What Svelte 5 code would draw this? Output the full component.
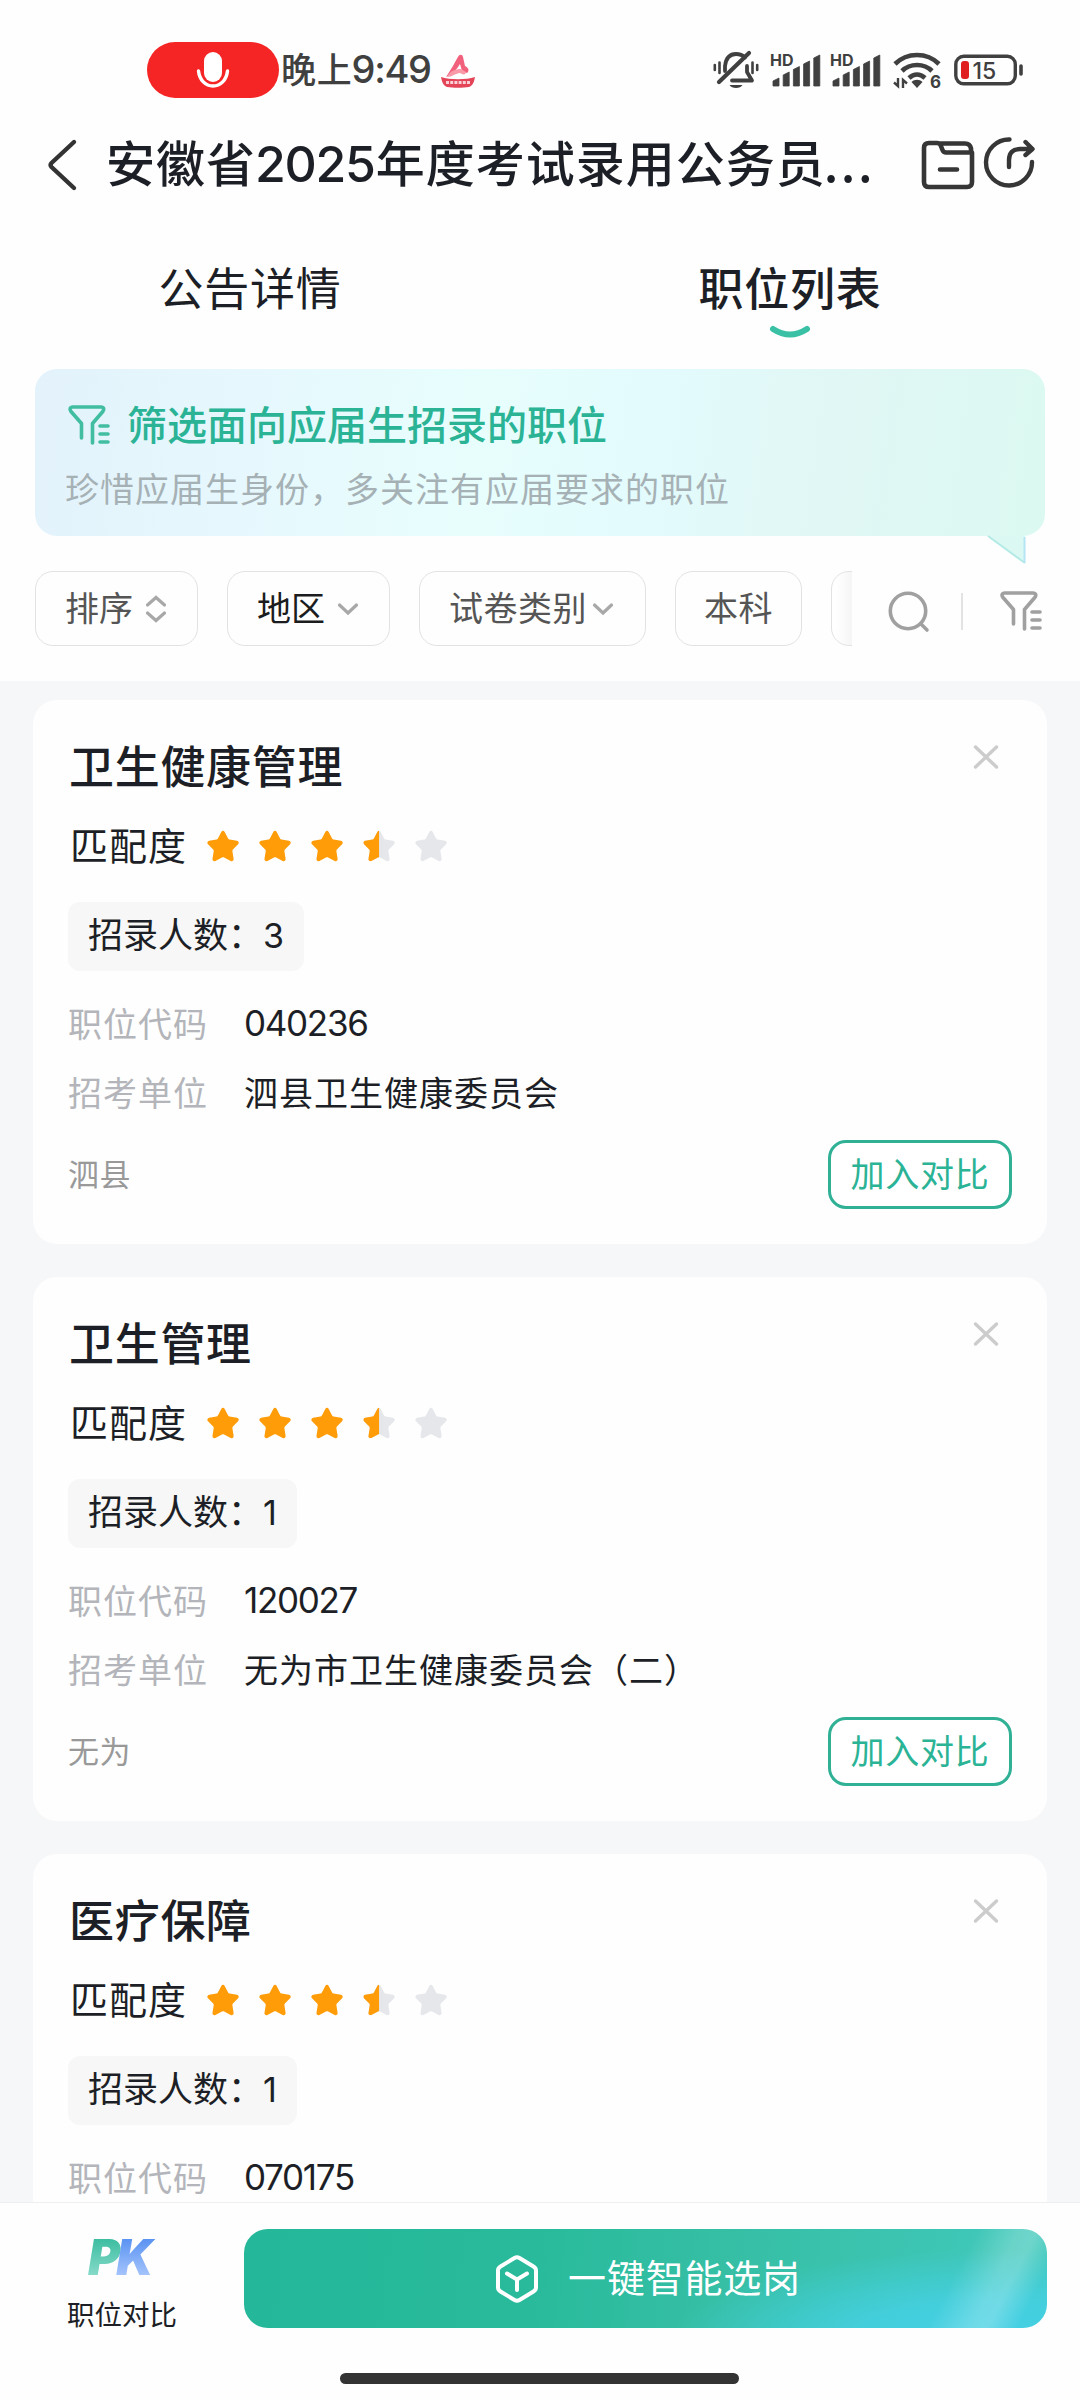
<script>
  const filters = [
    { label: '排序', icon: 'sort' },
    { label: '地区', icon: 'down', active: true },
    { label: '试卷类别', icon: 'down', tight: true },
    { label: '本科', plain: true }
  ];

  const jobs = [
    { title: '卫生健康管理', count: 3, code: '040236', unit: '泗县卫生健康委员会', area: '泗县' },
    { title: '卫生管理', count: 1, code: '120027', unit: '无为市卫生健康委员会（二）', area: '无为' },
    { title: '医疗保障', count: 1, code: '070175' }
  ];

  const stars = ['full', 'full', 'full', 'half', 'none'];
  const starPath =
    'M14.3 1.9c.7-1.5 2.7-1.5 3.4 0l3.4 6.6c.3.6.8 1 1.500 1.100l7.300 1.100c1.800.3 2.500 2.300 1.200 3.600l-5.200 5.300c-.4.4-.6 1.100-.5 1.700l1.200 7.500c.3 1.700-1.400 2.900-2.900 2.100l-6.600-3.500c-.6-.3-1.500-.3-2.100 0l-6.600 3.500c-1.500.8-3.200-.4-2.900-2.100l1.200-7.500c.1-.6-.1-1.300-.5-1.700L1 14.300c-1.300-1.300-.6-3.300 1.200-3.600l7.300-1.100c.6-.1 1.100-.5 1.400-1.100z';
  const bars = [8, 14, 19.5, 25, 31];
</script>

{#snippet funnel()}
  <svg class="funnel" viewBox="0 0 42 40" width="42" height="40">
    <path
      d="M13.500 33V18.500L3 6.500C1.200 4.400 2 2 4.800 2H33c2.800 0 3.600 2.400 1.800 4.500L24.500 18.500V38M32 21h8M32 29h8M32 37h8"
      fill="none" stroke="currentColor" stroke-width="3.600" stroke-linecap="round" stroke-linejoin="round" />
  </svg>
{/snippet}

{#snippet signal()}
  <svg class="signal" viewBox="0 0 50 40" width="50" height="40">
    <text x="-1" y="16" class="hd">HD</text>
    {#each bars as h, i}
      <path d="M{2 + i * 10.200} {36 - h + 3}l6-3V36h-6z" fill="#404040" stroke="#404040" stroke-width=".8" stroke-linejoin="round" />
    {/each}
  </svg>
{/snippet}

<div class="screen">
  <div class="status">
    <div class="mic">
      <svg viewBox="0 0 34 38" width="34" height="38">
        <rect x="8" y="1" width="18" height="30" rx="9" fill="#fff" />
        <path d="M2.500 20c1 9 7 15 14.500 15s13.500-6 14.500-15" fill="none" stroke="#fff" stroke-width="3.400" stroke-linecap="round" />
      </svg>
    </div>
    <div class="time">晚上<span>9:49</span></div>
    <svg class="boat" viewBox="0 0 36 34" width="36" height="34">
      <path d="M6 22C11 15 15 7 18.500 1c1.500-2 4-1.500 4.500 1l2 9c4 2 4.500 5 2 7l-5-2-2-7c-3 5-7 10-14 13z" fill="#f2617c" />
      <path d="M7 22c3-6 8-8 14-8l5 3c0 3-3 3-6 1-4 0-8 4-13 4z" fill="#f99aa8" />
      <path d="M1 22c9 3 25 3 34 0-1 6-3 9-6 10-6 1-16 1-22 0-3-1-5-4-6-10z" fill="#e34458" />
      <path d="M6 27.500h24" stroke="#fff" stroke-width="3" stroke-dasharray="3 1.200" opacity=".75" />
    </svg>
    <div class="sys">
      <svg viewBox="0 0 46 40" width="46" height="40">
        <g fill="none" stroke="#404040" stroke-width="3.800" stroke-linecap="round">
          <path d="M12 21v-5C13 8 17 4 23 4c4 0 7 1.500 9 3.500M34 16v6l5 8.500H19" stroke-linejoin="round" />
          <path d="M6 32 36 3" stroke-width="4.200" />
          <path d="M1.800 15v5M6.500 12.500v10.500M39.500 12.500v10.500M44.200 15v5" stroke-width="2.600" />
        </g>
        <path d="M16.500 35h13c-2 4-11 4-13 0z" fill="#404040" />
      </svg>
      {@render signal()}
      {@render signal()}
      <svg class="wifi" viewBox="0 0 48 40" width="48" height="40">
        <g fill="none" stroke="#404040" stroke-width="4.600">
          <path d="M2 14C14 2 34 2 46 14" />
          <path d="M9 21c8-8 22-8 30 0" />
          <path d="M16 28c5-4.500 11-4.500 16 0" />
        </g>
        <path d="M18.500 32c3-3 8-3 11 0L24 38z" fill="#404040" />
        <path d="M5 28v8L1 32.500M10 38v-8l4 3.500" stroke="#404040" stroke-width="2.400" fill="none" />
        <text x="37" y="38" class="six">6</text>
      </svg>
      <svg viewBox="0 0 70 32" width="70" height="32">
        <rect x="1.800" y="2.300" width="59.500" height="27.500" rx="8" fill="none" stroke="#404040" stroke-width="3.400" />
        <rect x="7" y="7" width="8" height="18" rx="3" fill="#e02020" />
        <text x="18.500" y="24.600" class="level">15</text>
        <path d="M67 12v8" stroke="#404040" stroke-width="3.600" stroke-linecap="round" />
      </svg>
    </div>
  </div>

  <header class="titlebar">
    <svg class="back" viewBox="0 0 30 52" width="30" height="52">
      <path d="M27 3 4.500 24q-2 2 0 4L27 49" fill="none" stroke="#333" stroke-width="4.400" stroke-linecap="round" />
    </svg>
    <h1>安徽省<span>2025</span>年度考试录用公务员<i>...</i></h1>
    <svg class="folder" viewBox="0 0 54 50" width="54" height="50" fill="none" stroke="#363636" stroke-width="4.600" stroke-linecap="round" stroke-linejoin="round">
      <path d="M8 3h8q2.500 0 3.500 2l2 5q1 2.500 3.500 2.500H51V42q0 5-5 5H8q-5 0-5-5V8q0-5 5-5zM18 3.500h26q5 0 6 5V13M19 29.500h17" />
    </svg>
    <svg class="share" viewBox="0 0 52 52" width="52" height="52" fill="none" stroke="#363636" stroke-width="4.400" stroke-linecap="round" stroke-linejoin="round">
      <path d="M26.500 3.500A23 23 0 1 0 49 26M26 31v-7q0-11 11-11h12M42.500 6 49.500 13l-7 6" />
    </svg>
  </header>

  <nav class="tabs">
    <div class="tab">公告详情</div>
    <div class="tab on">
      职位列表
      <svg viewBox="0 0 42 14" width="42" height="14">
        <path d="M4 4Q21 15 38 4" fill="none" stroke="#3ac1a5" stroke-width="6" stroke-linecap="round" />
      </svg>
    </div>
  </nav>

  <section class="banner">
    <div class="headline">{@render funnel()}<span>筛选面向应届生招录的职位</span></div>
    <p>珍惜应届生身份，多关注有应届要求的职位</p>
    <svg class="tail" viewBox="0 0 40 30" width="40" height="30">
      <path d="M1 0H38V27z" fill="#dbf8f2" />
      <path d="M1 0 38 27" stroke="#b4eae6" stroke-width="2" />
      <path d="M37.500 1V27" stroke="#b5e6f5" stroke-width="2" />
    </svg>
  </section>

  <div class="filters">
    <div class="chips">
      {#each filters as f}
        <div class="chip" class:active={f.active} class:tight={f.tight} class:plain={f.plain}>
          <span>{f.label}</span>
          {#if f.icon === 'sort'}
            <svg viewBox="0 0 22 28" width="22" height="28"><path d="M2.500 10 11 2.500 19.500 10M2.500 18l8.500 7.500 8.500-7.500" /></svg>
          {:else if f.icon === 'down'}
            <svg viewBox="0 0 22 14" width="22" height="14"><path d="M2.500 3 11 11l8.500-8" /></svg>
          {/if}
        </div>
      {/each}
      <div class="chip more"></div>
    </div>
    <svg class="search" viewBox="0 0 42 42" width="42" height="42" fill="none" stroke="#a0a0a0" stroke-width="3.600" stroke-linecap="round">
      <circle cx="20" cy="20" r="17.700" /><path d="m33 33 6 6" />
    </svg>
    <i class="rule"></i>
    {@render funnel()}
  </div>

  <main>
    {#each jobs as job}
      <article>
        <svg class="close" viewBox="0 0 26 26" width="26" height="26">
          <path d="M2.500 3l21 20M23.500 3l-21 20" stroke="#ccc" stroke-width="3.400" stroke-linecap="round" />
        </svg>
        <h2>{job.title}</h2>
        <div class="match">
          <span>匹配度</span>
          {#each stars as s}
            <svg viewBox="0 0 32 33" width="32" height="33">
              <path d={starPath} class={s === 'full' ? 'gold' : 'grey'} />
              {#if s === 'half'}<path d={starPath} class="gold half" />{/if}
            </svg>
          {/each}
        </div>
        <div class="tag">招录人数：<em>{job.count}</em></div>
        <div class="row"><span>职位代码</span><b class="num">{job.code}</b></div>
        {#if job.unit}
          <div class="row"><span>招考单位</span><b>{job.unit}</b></div>
          <div class="foot"><span>{job.area}</span><button>加入对比</button></div>
        {/if}
      </article>
    {/each}
  </main>

  <footer>
    <div class="actions">
      <div class="pk">
        <svg viewBox="0 0 80 60" width="80" height="60">
          <defs>
            <linearGradient id="p-fill" gradientUnits="userSpaceOnUse" x1="0" y1="12" x2="0" y2="50"><stop offset="0" stop-color="#3dbda1" /><stop offset="1" stop-color="#8adccb" /></linearGradient>
            <linearGradient id="k-fill" gradientUnits="userSpaceOnUse" x1="0" y1="12" x2="0" y2="50"><stop offset="0" stop-color="#5a93f2" /><stop offset="1" stop-color="#a8c6fc" /></linearGradient>
          </defs>
          <text x="6" y="48"><tspan fill="url(#p-fill)">P</tspan><tspan fill="url(#k-fill)">K</tspan></text>
        </svg>
        <span>职位对比</span>
      </div>
      <div class="cta">
        <svg viewBox="0 0 44 50" width="44" height="50" fill="none" stroke="#fff" stroke-width="4" stroke-linecap="round" stroke-linejoin="round">
          <path d="M19.500 4q2.500-1.500 5 0L38.500 12.500q2.500 1.500 2.500 4v17q0 2.500-2.500 4L24.500 46q-2.500 1.500-5 0L5.500 37.500Q3 36 3 33.500v-17q0-2.500 2.500-4zM12 19.500l10 6 10-6M22 25.500V36" />
        </svg>
        <span>一键智能选岗</span>
      </div>
    </div>
    <div class="home"></div>
  </footer>
</div>

<style>
  :global(body) { background: #fff; overflow: hidden; }
  .screen {
    width: 1080px; height: 2400px; overflow: hidden; background: #fefefe;
    display: flex; flex-direction: column; box-sizing: border-box;
    font-family: 'Noto Sans CJK SC', 'Noto Sans', sans-serif; color: #1d1f26;
  }
  svg { display: block; flex: none; overflow: visible; }

  .status { height: 120px; box-sizing: border-box; padding: 20px 56px 0 147px; display: flex; align-items: center; flex: none; }
  .mic { width: 132px; height: 56px; border-radius: 28px; background: #f52525; display: flex; align-items: center; justify-content: center; }
  .time { font-size: 35px; letter-spacing: .8px; line-height: 50px; color: #404040; margin: -4px 0 0 2px; font-weight: 500; white-space: nowrap; width: 159px; }
  .time span { font-family: Inter, sans-serif; font-size: 38px; letter-spacing: -1.300px; margin-left: -1px; }
  .boat { margin-top: 4px; }
  .sys { margin-left: auto; display: flex; align-items: center; }
  .sys .signal { margin-left: 12px; }
  .sys .signal + .signal { margin-left: 10px; }
  .sys .wifi { margin: 0 13px 0 12px; }
  .hd { font: 700 16px Inter, sans-serif; fill: #404040; }
  .six { font: 700 17px Inter, sans-serif; fill: #404040; }
  .level { font: 500 23px Inter, sans-serif; fill: #404040; }

  .titlebar { height: 90px; display: flex; align-items: center; padding-left: 47px; flex: none; }
  h1 { margin: -5px 0 0 29px; width: 815px; font-size: 49px; letter-spacing: 1px; line-height: 72px; font-weight: 500; white-space: nowrap; }
  h1 span { font-family: Inter, sans-serif; font-size: 50px; letter-spacing: -1.300px; margin-left: -1px; margin-right: 1px; }
  h1 i { font-style: normal; letter-spacing: 2.600px; margin-left: -2px; }
  .share { margin-left: 8px; margin-top: -6px; }

  .tabs { height: 159px; box-sizing: border-box; padding-top: 45px; display: flex; flex: none; }
  .tab { flex: none; width: 540px; box-sizing: border-box; padding-right: 40px; font-size: 45px; letter-spacing: .8px; line-height: 64px; display: flex; flex-direction: column; align-items: center; }
  .tab.on { font-weight: 500; }
  .tab svg { margin-top: 6px; }

  .banner {
    position: relative; margin: 0 35px; height: 167px; box-sizing: border-box; padding: 30px 30px 0; border-radius: 22px; flex: none;
    background: linear-gradient(98deg, #e3f2fb 0%, #e6f8fd 22%, #e8fefd 44%, #e3fbfd 60%, #e1f7f5 78%, #dbf9f1 100%);
  }
  .headline { display: flex; align-items: center; gap: 17px; height: 50px; padding-left: 3px; color: #41bda2; }
  .headline span { font-size: 40px; line-height: 50px; font-weight: 500; color: #2bb396; margin-top: -3px; }
  .headline .funnel { margin-top: 2px; }
  .banner p { margin: 14px 0 0; font-size: 34px; letter-spacing: 1px; line-height: 50px; color: #a6b1b5; white-space: nowrap; }
  .tail { position: absolute; left: 952px; top: 167px; }

  .filters { height: 145px; box-sizing: border-box; padding: 35px 0 0 35px; display: flex; align-items: flex-start; flex: none; color: #a0a0a0; }
  .chips { display: flex; gap: 29px; width: 817px; overflow: hidden; flex: none; }
  .chip { flex: none; height: 75px; box-sizing: border-box; padding: 0 30px 0 29px; border: 1px solid #e2e2e2; border-radius: 18px; display: flex; align-items: center; gap: 12px; font-size: 34px; line-height: 50px; color: #555; white-space: nowrap; }
  .chip span { margin-top: -4px; }
  .chip svg path { fill: none; stroke: #a8a8a8; stroke-width: 3.200; stroke-linecap: round; }
  .chip.active { color: #1b1c20; }
  .chip.tight { gap: 5px; padding-right: 31px; letter-spacing: .5px; }
  .chip.plain { padding: 0 28px; letter-spacing: .5px; }
  .chip.more { width: 90px; background: linear-gradient(90deg, #fff 4px, #f6f6f6 19px); }
  .search { margin: 20px 0 0 36px; }
  .rule { width: 2px; height: 37px; background: #e3e3e3; margin: 22px 37px 0 31px; }
  .filters > .funnel { margin-top: 20px; }

  main { flex: 1; min-height: 0; overflow: hidden; background: #f6f7f9; padding: 19px 33px 0; display: flex; flex-direction: column; gap: 33px; }
  article { position: relative; flex: none; height: 544px; box-sizing: border-box; padding: 39px 35px 0 35px; background: #fefefe; border-radius: 24px; }
  .close { position: absolute; right: 48px; top: 44px; }
  h2 { margin: 0 0 0 1px; font-size: 45px; letter-spacing: .7px; line-height: 52px; font-weight: 500; }
  .match { display: flex; align-items: center; gap: 20px; height: 50px; margin: 30px 0 0 2px; }
  .match span { font-size: 38px; letter-spacing: 1px; line-height: 50px; width: 117px; margin-top: -4px; white-space: nowrap; }
  .gold { fill: #ff9c08; }
  .grey { fill: #e5e7eb; }
  .half { clip-path: inset(0 50% 0 0); }
  .tag { margin: 31px 0 0; display: inline-block; height: 69px; box-sizing: border-box; padding: 0 20px 4px; line-height: 62px; font-size: 35px; background: #f7f7f7; border-radius: 12px; }
  .tag em { font-family: Inter, sans-serif; font-style: normal; font-size: 34px; }
  .row { display: flex; height: 50px; margin-top: 19px; font-size: 34px; letter-spacing: 1px; line-height: 50px; }
  .tag + .row { margin-top: 27px; }
  .row span { width: 176px; color: #b3b5ba; }
  .row b { font-weight: 400; }
  .row .num { font-family: Inter, sans-serif; font-size: 35px; letter-spacing: -1.300px; }
  .foot { display: flex; align-items: center; justify-content: space-between; height: 69px; margin-top: 23px; }
  .foot span { font-size: 31px; letter-spacing: .5px; color: #999; line-height: 44px; margin-top: -4px; }
  button { box-sizing: border-box; width: 184px; height: 69px; margin: 0; padding: 0 0 3px; border: 3px solid #30b196; border-radius: 18px; background: #fff; color: #2bb396; font: 400 34px/58px 'Noto Sans CJK SC', sans-serif; letter-spacing: .8px; }

  footer { flex: none; height: 198px; box-sizing: border-box; border-top: 1px solid #eee; background: #fefefe; display: flex; flex-direction: column; align-items: center; }
  .actions { align-self: stretch; display: flex; padding: 26px 33px 0 65px; height: 125px; box-sizing: border-box; }
  .pk { width: 114px; display: flex; flex-direction: column; align-items: center; box-sizing: border-box; }
  .pk svg { margin: -2px 0 0 0; }
  .pk text { font: italic 900 49px Inter, sans-serif; letter-spacing: -4px; }
  .pk span { font-size: 27.500px; line-height: 40px; margin-top: 6px; }
  .cta {
    margin-left: auto; width: 803px; height: 99px; border-radius: 24px; box-sizing: border-box; padding-left: 5px; display: flex; align-items: center; justify-content: center; gap: 29px; color: #fff;
    background:
      linear-gradient(117deg, transparent 86%, rgba(255, 255, 255, .22) 91%, rgba(255, 255, 255, .24) 93%, transparent 96.500%),
      radial-gradient(ellipse 330px 90px at 94% 112%, #45d0e6 0%, rgba(68, 208, 226, .85) 45%, rgba(68, 208, 226, 0) 100%),
      linear-gradient(97deg, #24b799 0%, #28ba9b 35%, #36bfa5 60%, #42c9bd 100%);
  }
  .cta span { font-size: 38px; letter-spacing: .8px; line-height: 50px; margin-top: -5px; }
  .home { width: 399px; height: 11px; border-radius: 6px; background: #333; margin: 45px 1px 0 0; }
</style>
